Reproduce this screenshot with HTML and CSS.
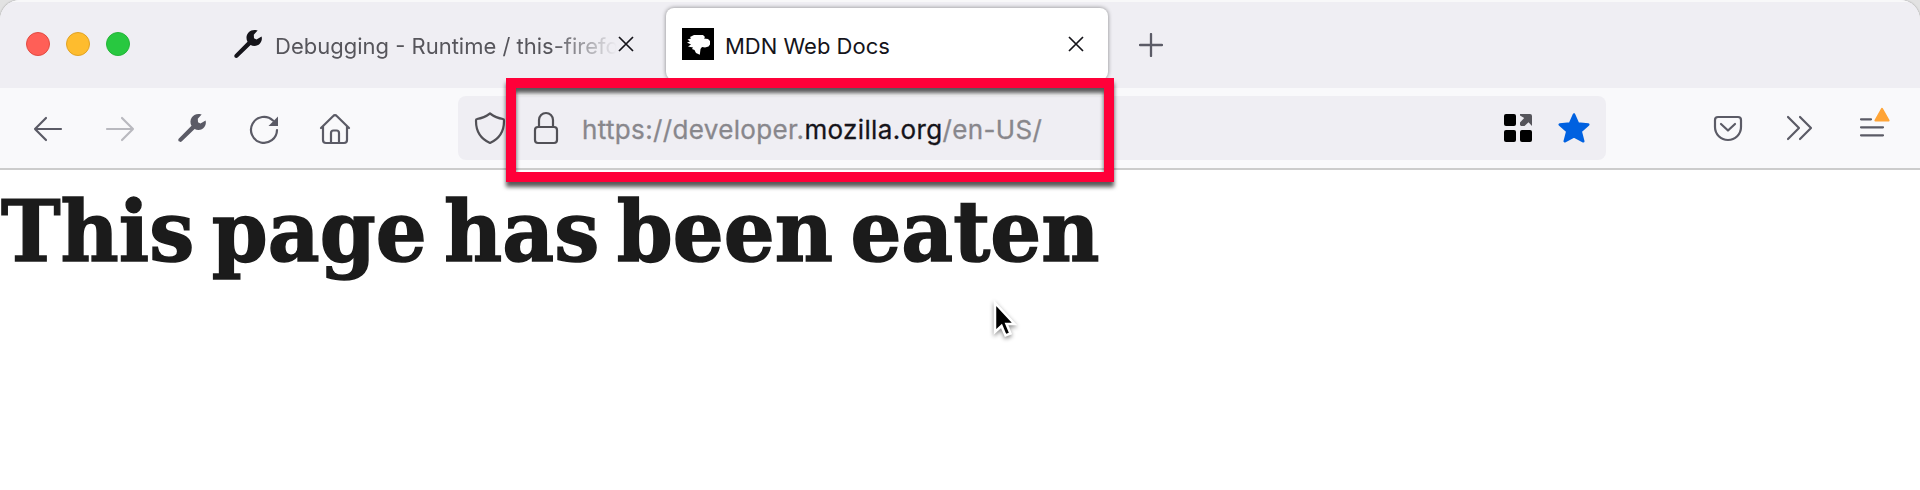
FILE: index.html
```
<!DOCTYPE html>
<html lang="en">
<head>
<meta charset="utf-8">
<title>MDN Web Docs</title>
<link rel="stylesheet" href="styles.css">
</head>
<body>
<div class="window">
  <header class="tabstrip">
    <div class="lights"><i class="light close"></i><i class="light minimize"></i><i class="light maximize"></i></div>
    <div class="tab">
      <svg class="icon favicon" viewBox="0 0 32 32"><path class="wrench" d="M29.600 8.500C30.900 13.200 27.500 18 22.500 18C21 18 19.700 17.700 18.600 17.100L5.900 29.300C3.900 31.200 1 28.600 2.900 26.500L15.500 13.800C12.500 8 16.500 2 22.500 2C24 2 25 2.200 25.600 2.500L21.800 6.800L22 10.300L24.500 11.400Z"/></svg>
      <span class="title faded">Debugging - Runtime / this-firefox</span>
      <svg class="x" viewBox="0 0 16 16"><path d="M1 1L15 15M15 1L1 15"/></svg>
    </div>
    <div class="tab active">
      <svg class="icon favicon" viewBox="0 0 32 32"><path d="M0 0H32V32H0Z"/><path class="dino" d="M12 7H21L23 9L22 10.500L26 11L28 13V16.500L26.500 18.500L23 19.500L20 19L18.500 21L17.800 26.700L14 25L12.500 22L10 21L11 19.500L6 18.500L9 16.500L5 14.500L8 13.500L5.500 11.500L9 10.500L8 9Z"/></svg>
      <span class="title">MDN Web Docs</span>
      <svg class="x" viewBox="0 0 16 16"><path d="M1 1L15 15M15 1L1 15"/></svg>
    </div>
    <svg class="plus" viewBox="0 0 24 24"><path d="M12 1V23M1 12H23"/></svg>
  </header>
  <nav class="toolbar">
    <div class="buttons">
      <svg class="icon line" viewBox="0 0 32 32"><path d="M29 17H3M14 6L3 17L14 28"/></svg>
      <svg class="icon line disabled" viewBox="0 0 32 32"><path d="M3 17H29M18 6L29 17L18 28"/></svg>
      <svg class="icon" viewBox="0 0 32 32"><path class="tool" d="M29.600 8.500C30.900 13.200 27.500 18 22.500 18C21 18 19.700 17.700 18.600 17.100L5.900 29.300C3.900 31.200 1 28.600 2.900 26.500L15.500 13.800C12.500 8 16.500 2 22.500 2C24 2 25 2.200 25.600 2.500L21.800 6.800L22 10.300L24.500 11.400Z"/></svg>
      <svg class="icon line" viewBox="0 0 32 32"><path d="M29 18A13 13 0 1 1 25 8.500"/><path class="reload-head" d="M30 4.500V14H20.500Z"/></svg>
      <svg class="icon line home" viewBox="0 0 32 32"><path d="M2 16L14 4.200Q16 2 18 4.200L30 16M4 14V28Q4 31 7 31H25Q28 31 28 28V14M12 31V21Q12 18.500 14.500 18.500H17.500Q20 18.500 20 21V31"/></svg>
    </div>
    <div class="urlbar">
      <svg class="icon line dark" viewBox="0 0 32 32"><path d="M16 1.500Q22 6 29 7Q30 7 30 9C30 20 25 27 16 31C7 27 2 20 2 9Q2 7 3 7Q10 6 16 1.500Z"/></svg>
      <svg class="icon line dark lock" viewBox="0 0 32 32"><path d="M9 14V8A7 7 0 0 1 23 8V14"/><rect x="5" y="15" width="22" height="16" rx="3"/></svg>
      <span class="url">https://developer.<b>mozilla.org</b>/en-US/</span>
      <svg class="icon grid" viewBox="0 0 32 32"><rect x="2" y="2" width="12" height="12" rx="2"/><rect x="2" y="18" width="12" height="12" rx="2"/><rect x="18" y="18" width="12" height="12" rx="2"/><path class="arrow" d="M18 2H28Q30 2 30 4V14L26.500 10.200L22.500 14H19L18 13V10.500L22.200 6L18 3.500Z"/></svg>
      <svg class="icon star" viewBox="0 0 32 32"><path d="M16 2.500L20 11.500L30.300 12.500L22.700 19.300L25.300 29.300L16 24.500L6.700 29.300L9.300 19.300L1.700 12.500L12 11.500Z"/></svg>
    </div>
    <div class="buttons">
      <svg class="icon line" viewBox="0 0 32 32"><path d="M6 5H26Q29 5 29 8V15A13 13 0 0 1 3 15V8Q3 5 6 5ZM9 12L16 18.500L23 12"/></svg>
      <svg class="icon line" viewBox="0 0 32 32"><path d="M4 5L15 16L4 27M16 5L27 16L16 27"/></svg>
      <svg class="icon line" viewBox="0 0 32 32"><path d="M5 7.300H15M5 15.300H27M5 23.300H27"/><path class="warn" d="M26 -3L32.500 8.500H19.500Z"/></svg>
    </div>
  </nav>
  <main class="page"><h1>This page has been eaten</h1></main>
</div>
<div class="highlight"></div>
<svg class="cursor" viewBox="0 0 24 40"><path d="M2 4V33L8.500 27L12.500 36.500L17.500 34.500L13.500 25H21.500Z"/></svg>
</body>
</html>
```
FILE: styles.css
```
* { box-sizing: border-box; }
body { margin: 0; width: 1920px; height: 490px; overflow: hidden; position: relative; background: #e2e2e2; font-family: Inter, "Liberation Sans", sans-serif; }
svg { display: block; flex: none; fill: none; }
.window { height: 490px; background: #fff; border-radius: 20px 20px 0 0; overflow: hidden; box-shadow: 0 0 2px #888; }
.tabstrip { height: 88px; background: #efeef3; border-top: 2px solid #f8f8f9; display: flex; align-items: flex-start; }
.lights { display: flex; gap: 16px; padding: 30px 0 0 26px; width: 218px; }
.light { width: 24px; height: 24px; border-radius: 50%; border: 1px solid; }
.close { background: #ff5f57; border-color: #e24b41; }
.minimize { background: #febc2e; border-color: #e1a325; }
.maximize { background: #28c840; border-color: #24b538; }
.tab { width: 442px; height: 72px; margin: 6px 6px 0 0; padding: 0 24px 0 16px; display: flex; align-items: center; font-size: 22px; color: #56555b; }
.tab:not(.active) { padding-left: 14px; padding-right: 26px; }
.tab.active { background: #fff; border-radius: 8px; box-shadow: 0 0 4px rgba(0,0,0,.45); color: #15141a; margin-right: 3px; }
.icon { width: 32px; height: 32px; overflow: visible; }
.title { flex: 1; margin-left: 11px; line-height: 32px; padding-top: 4px; white-space: nowrap; overflow: hidden; }
.faded { margin-left: 11px; -webkit-mask-image: linear-gradient(to right, #000 278px, transparent 342px); mask-image: linear-gradient(to right, #000 278px, transparent 342px); }
.x { width: 16px; height: 16px; stroke: #15141a; stroke-width: 1.7; }
.plus { width: 24px; height: 24px; margin: 31px 0 0 28px; stroke: #5b5b66; stroke-width: 2.3; stroke-linecap: round; }
.favicon { fill: #000; }
.wrench { fill: #15141a; }
.dino { fill: #fff; }
.toolbar { height: 82px; background: #f9f9fb; border-bottom: 2px solid #ccc; padding: 0 32px; display: flex; align-items: center; justify-content: space-between; }
.buttons { display: flex; gap: 40px; }
.line { stroke: #5b5b66; stroke-width: 2.2; stroke-linecap: round; stroke-linejoin: round; }
.line.dark { stroke: #515056; }
.disabled { opacity: .4; }
.tool { fill: #5b5b66; }
.reload-head { fill: #5b5b66; stroke: none; }
.home { margin-left: -1px; }
.urlbar { width: 1148px; height: 64px; margin-left: 1px; border-radius: 8px; background: #efeef3; padding: 0 16px; display: flex; align-items: center; }
.lock { margin-left: 24px; }
.url { flex: 1; margin-left: 20px; font-size: 26px; line-height: 36px; letter-spacing: .35px; padding-top: 3px; color: #88878c; white-space: nowrap; -webkit-text-stroke: .3px; }
.url b { font-weight: 400; color: #15141a; }
.grid { fill: #000; margin-right: 24px; }
.arrow { fill: #56555b; }
.star { fill: #0061e0; stroke: #0061e0; stroke-width: 2.5; stroke-linejoin: round; }
.warn { fill: #ffa436; stroke: #ffa436; }
.page { padding: 6px 0 0 1px; }
h1 { margin: 0; width: max-content; font: 700 85px/110px "DejaVu Serif", serif; color: #1b1b1b; transform-origin: 0 0; transform: scaleX(.942); word-spacing: -11px; white-space: nowrap; -webkit-text-stroke: 1.5px #1b1b1b; }
.highlight { position: absolute; left: 506px; top: 78px; width: 608px; height: 104px; border: 10px solid #ff0039; filter: drop-shadow(0 5px 2px rgba(0,0,0,.65)); }
.cursor { position: absolute; left: 993px; top: 299px; width: 24px; height: 40px; overflow: visible; fill: #000; stroke: #fff; stroke-width: 2.5; filter: drop-shadow(0 2px 2px rgba(0,0,0,.45)); }
```
